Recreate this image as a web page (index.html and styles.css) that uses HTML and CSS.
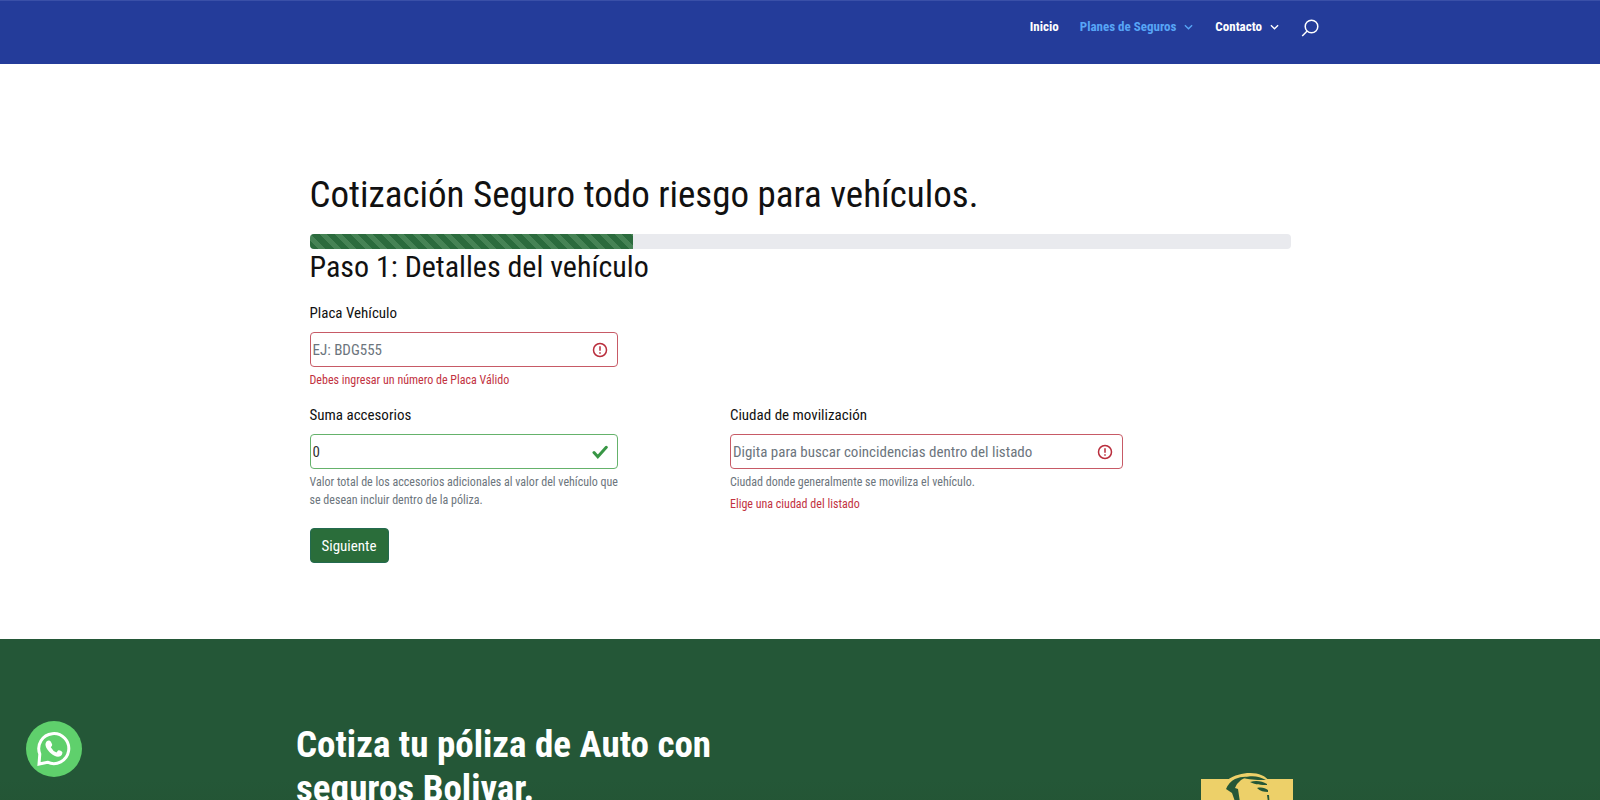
FILE: index.html
```html
<!DOCTYPE html>
<html lang="es">
<head>
<meta charset="utf-8">
<title>Cotización Seguro todo riesgo para vehículos</title>
<meta name="viewport" content="width=device-width, initial-scale=1">
<link rel="stylesheet" href="styles.css">
</head>
<body>
<header class="site-header">
  <nav class="nav" aria-label="Principal">
    <a class="nav-link" href="#inicio">Inicio</a>
    <a class="nav-link nav-link-active" href="#planes">Planes de Seguros
      <svg class="chevron" viewBox="0 0 10 6" aria-hidden="true"><path d="M1 1l4 4 4-4"/></svg></a>
    <a class="nav-link" href="#contacto">Contacto
      <svg class="chevron" viewBox="0 0 10 6" aria-hidden="true"><path d="M1 1l4 4 4-4"/></svg></a>
    <button class="search" type="button" aria-label="Buscar">
      <svg viewBox="0 0 18 18" aria-hidden="true"><circle cx="10.5" cy="7.5" r="6.3"/><path d="M6.200 12L1.200 17"/></svg>
    </button>
  </nav>
</header>

<main class="quote">
  <h1 class="title">Cotización Seguro todo riesgo para vehículos.</h1>
  <div class="progress" role="progressbar" aria-label="Progreso" aria-valuenow="33" aria-valuemin="0" aria-valuemax="100">
    <div class="progress-bar" style="width:33%"></div>
  </div>
  <h2 class="step">Paso 1: Detalles del vehículo</h2>
  <form class="form" novalidate>
    <div class="field field-first">
      <label for="placa">Placa Vehículo</label>
      <div class="control">
        <input class="input invalid" id="placa" type="text" placeholder="EJ: BDG555">
        <svg class="state state-error" viewBox="0 0 16 16" aria-hidden="true"><circle cx="8" cy="8" r="6.5"/><path d="M8 4.200v4.600M8 10.200v1.600"/></svg>
      </div>
      <p class="note error">Debes ingresar un número de Placa Válido</p>
    </div>
    <div class="field">
      <label for="suma">Suma accesorios</label>
      <div class="control">
        <input class="input valid" id="suma" type="text" value="0">
        <svg class="state state-ok" viewBox="0 0 16 16" aria-hidden="true"><path d="M2 8.500l3.800 4.200L14.300 3.300"/></svg>
      </div>
      <p class="note">Valor total de los accesorios adicionales al valor del vehículo que se desean incluir dentro de la póliza.</p>
    </div>
    <div class="field field-wide">
      <label for="ciudad">Ciudad de movilización</label>
      <div class="control">
        <input class="input invalid" id="ciudad" type="text" placeholder="Digita para buscar coincidencias dentro del listado">
        <svg class="state state-error" viewBox="0 0 16 16" aria-hidden="true"><circle cx="8" cy="8" r="6.5"/><path d="M8 4.200v4.600M8 10.200v1.600"/></svg>
      </div>
      <p class="note">Ciudad donde generalmente se moviliza el vehículo.</p>
      <p class="note error">Elige una ciudad del listado</p>
    </div>
    <div class="actions"><button class="next" type="button">Siguiente</button></div>
  </form>
</main>

<section class="promo">
  <div class="promo-inner">
    <h2 class="promo-title">Cotiza tu póliza de Auto con seguros Bolivar.</h2>
    <svg class="logo" viewBox="0 0 92 98" role="img" aria-label="Seguros Bolívar">
      <path fill="#edd069" d="M0 7h92v91H0zM26 8C34 3 41 1 49 1c9 0 16 3 19 8v8H30z"/>
      <path fill="#245737" d="M34 7Q28 10 25 17l6 4 6 17 3-1-3-20-3-1q2-5 6-8 4-3 8-3-7-1-14 2z"/>
      <path fill="#245737" d="M42 6c8-3 16-2 23 2-8 0-13 0-23-2zM49 10c6-2 12-1 17 2v1c-6 0-11 0-17-3zM56 16c5-1 8 0 11 2v2c-4 0-8-1-11-4zM66 23l2 0 1 14h-1z"/>
    </svg>
  </div>
</section>

<a class="whatsapp" href="#whatsapp" aria-label="WhatsApp">
  <svg viewBox="0 0 36 36" aria-hidden="true">
    <path class="bubble" d="M3 33L3.800 23A15 15 0 1 1 11.500 31.200Z"/>
    <path class="phone" d="M10.500 10.500C12 9 14 9 15 11L16.200 13.500Q16.500 14.500 14.800 16.200Q17 20.200 20.500 21.500L22 19.600Q23 18.900 25.500 20.200Q27.200 21 26 23.500C23.500 27.500 18.500 25.500 15 22.500C11.500 19.500 7.500 14 10.500 10.500Z"/>
  </svg>
</a>
</body>
</html>
```
FILE: styles.css
```css
* { box-sizing: border-box; }

body {
  margin: 0;
  height: 100vh;
  overflow: hidden;
  background: #fff;
  color: #111;
  font-family: "Roboto Condensed", Roboto, "Liberation Sans", sans-serif;
  font-size: 15px;
}

h1, h2, p { margin: 0; }

.site-header {
  height: 64px;
  border-top: 1px solid #3a50a8;
  background: #243c9a;
}

.nav {
  display: flex;
  justify-content: flex-end;
  align-items: center;
  gap: 21px;
  width: 80%;
  max-width: 1038px;
  margin: 0 auto;
  padding-top: 16px;
}

.nav-link {
  display: flex;
  align-items: center;
  gap: 8px;
  color: #fff;
  font-size: 13px;
  line-height: 20px;
  font-weight: 700;
  text-decoration: none;
}

.nav-link-active { color: #57a5f6; }

.chevron {
  width: 9px;
  height: 6px;
  margin-right: 1px;
  fill: none;
  stroke: currentColor;
  stroke-width: 1.500;
}

.search {
  width: 18px;
  height: 20px;
  padding: 2px 0 0;
  border: 0;
  background: none;
}

.search svg {
  display: block;
  width: 18px;
  height: 18px;
  fill: none;
  stroke: #fff;
  stroke-width: 1.500;
}

.quote {
  width: 80%;
  max-width: 981px;
  height: 575px;
  margin: 0 auto;
  padding-top: 108px;
}

.title {
  font-size: 37px;
  line-height: 46px;
  font-weight: 400;
}

.progress {
  height: 15px;
  margin-top: 16px;
  border-radius: 4px;
  background: #e9eaee;
  overflow: hidden;
}

.progress-bar {
  height: 100%;
  background: repeating-linear-gradient(45deg, #2b6b3d 0 6px, #468355 6px 11px);
}

.step {
  font-size: 30px;
  line-height: 36px;
  font-weight: 400;
}

.form {
  display: grid;
  grid-template-columns: 3fr 4fr;
  row-gap: 15px;
  padding-top: 18px;
}

.field { max-width: 308px; }
.field-first { grid-column: 1 / -1; padding-bottom: 1px; }
.field-wide { max-width: 393px; }

label {
  display: block;
  padding-bottom: 9px;
  line-height: 20px;
}

.control { position: relative; }

.input {
  display: block;
  width: 100%;
  height: 35px;
  padding: 0 36px 0 2px;
  border: 1px solid;
  border-radius: 4px;
  background: #fff;
  color: #333;
  font: inherit;
}

.input::placeholder { color: #6c757d; opacity: 1; }
.invalid { border-color: #c75a66; }
.valid { border-color: #65b26b; }

.state {
  position: absolute;
  top: 10px;
  right: 10px;
  width: 16px;
  height: 16px;
  fill: none;
}

.state-error { stroke: #b92d3c; stroke-width: 1.500; }
.state-ok { stroke: #389645; stroke-width: 3; stroke-linecap: round; }

.note {
  margin-right: -4px;
  padding-top: 4px;
  color: #6c757d;
  font-size: 12px;
  line-height: 18px;
}

.error { color: #c2323f; }

.actions { grid-column: 1 / -1; }

.next {
  height: 35px;
  padding: 0 11px;
  border: 1px solid #236a50;
  border-radius: 4px;
  background: #2a6d3a;
  color: #fff;
  font: inherit;
}

.promo {
  min-height: 161px;
  background: linear-gradient(#245737 140px, #22502f 240px);
}

.promo-inner {
  display: flex;
  justify-content: space-between;
  align-items: flex-start;
  width: 80%;
  max-width: 1008px;
  margin: 0 auto;
  padding-top: 84px;
}

.promo-title {
  max-width: 440px;
  color: #fff;
  font-size: 37px;
  line-height: 44px;
  font-weight: 700;
}

.logo {
  width: 92px;
  height: 98px;
  margin: 49px 11px 0 0;
}

.whatsapp {
  position: fixed;
  left: 26px;
  bottom: 23px;
  display: grid;
  place-items: center;
  width: 56px;
  height: 56px;
  border-radius: 50%;
  background: #5fd06c;
}

.whatsapp svg { width: 36px; height: 36px; }
.bubble { fill: none; stroke: #fff; stroke-width: 3; }
.phone { fill: #fff; }
```
